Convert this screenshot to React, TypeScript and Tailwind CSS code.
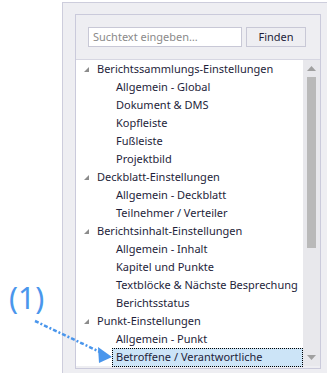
import React from "react";

type Row = { label: string; level: 0 | 1; selected?: boolean };

const rows: Row[] = [
  { label: "Berichtssammlungs-Einstellungen", level: 0 },
  { label: "Allgemein - Global", level: 1 },
  { label: "Dokument & DMS", level: 1 },
  { label: "Kopfleiste", level: 1 },
  { label: "Fußleiste", level: 1 },
  { label: "Projektbild", level: 1 },
  { label: "Deckblatt-Einstellungen", level: 0 },
  { label: "Allgemein - Deckblatt", level: 1 },
  { label: "Teilnehmer / Verteiler", level: 1 },
  { label: "Berichtsinhalt-Einstellungen", level: 0 },
  { label: "Allgemein - Inhalt", level: 1 },
  { label: "Kapitel und Punkte", level: 1 },
  { label: "Textblöcke & Nächste Besprechung", level: 1 },
  { label: "Berichtsstatus", level: 1 },
  { label: "Punkt-Einstellungen", level: 0 },
  { label: "Allgemein - Punkt", level: 1 },
  { label: "Betroffene / Verantwortliche", level: 1, selected: true },
];

function TreeRow({ row }: { row: Row }) {
  if (row.level === 0) {
    return (
      <div className="flex h-[18px] items-center">
        <svg width="5" height="5" viewBox="0 0 5 5" className="ml-[8px] mr-[8px]">
          <polygon points="5,0 5,5 0,5" fill="#8c8c8c" />
        </svg>
        <span className="whitespace-nowrap">{row.label}</span>
      </div>
    );
  }
  return (
    <div className="flex h-[18px] items-center">
      <span
        className={
          row.selected
            ? "ml-[36px] flex h-[19px] w-[191px] items-center border border-dotted border-black bg-[#cce4f7] pl-[3px] whitespace-nowrap"
            : "ml-[40px] whitespace-nowrap"
        }
      >
        {row.label}
      </span>
    </div>
  );
}

export default function App() {
  return (
    <div className="relative h-[373px] w-[327px] overflow-hidden bg-white font-['Segoe_UI','Noto_Sans',sans-serif] text-[11px] text-[#1e1e3a]">
      <div className="ml-[62px] mt-[2px] h-[371px] border-l border-t border-[#cdcddc] bg-[#eeeef2] pl-[12px] pt-[11px]">
        <div className="h-[355px] w-[246px] border border-[#cacadb] bg-[#eeeef2]">
          <div className="flex h-[45px] items-start gap-[4px] border-b border-[#d6d6e2] pl-[12px] pt-[12px]">
            <div className="flex h-[20px] w-[154px] items-center border border-[#c8c8d6] bg-white pl-[4px] text-[#8a8a8a]">
              Suchtext eingeben…
            </div>
            <div className="flex h-[20px] w-[60px] items-center justify-center border border-[#c8c8d6] bg-[#eeeef2]">
              Finden
            </div>
          </div>
          <div className="flex h-[306px]">
            <div className="flex-1 bg-white">
              {rows.map((r) => (
                <TreeRow key={r.label} row={r} />
              ))}
            </div>
            <div className="flex w-[17px] flex-col items-center bg-[#e8e8ec]">
              <svg width="9" height="5" viewBox="0 0 9 5" className="mt-[6px]">
                <polygon points="4.5,0 9,5 0,5" fill="#a0a0a0" />
              </svg>
              <div className="mt-[6px] h-[171px] w-[9px] bg-[#b9b9b9]" />
              <div className="flex-1" />
              <svg width="9" height="5" viewBox="0 0 9 5" className="mb-[6px]">
                <polygon points="0,0 9,0 4.5,5" fill="#a0a0a0" />
              </svg>
            </div>
          </div>
        </div>
      </div>
      <div className="absolute left-[9px] top-[283px] font-['Segoe_UI','Noto_Sans',sans-serif] text-[30px] leading-none text-[#4a96ec]">
        (1)
      </div>
      <svg className="absolute left-0 top-0" width="327" height="373" viewBox="0 0 327 373">
        <line x1="35" y1="321" x2="100" y2="352" stroke="#4a96ec" strokeWidth="2.5" strokeDasharray="4 2 2 2" />
        <polygon points="112,357 98,347 99,363" fill="#4a96ec" />
      </svg>
    </div>
  );
}
